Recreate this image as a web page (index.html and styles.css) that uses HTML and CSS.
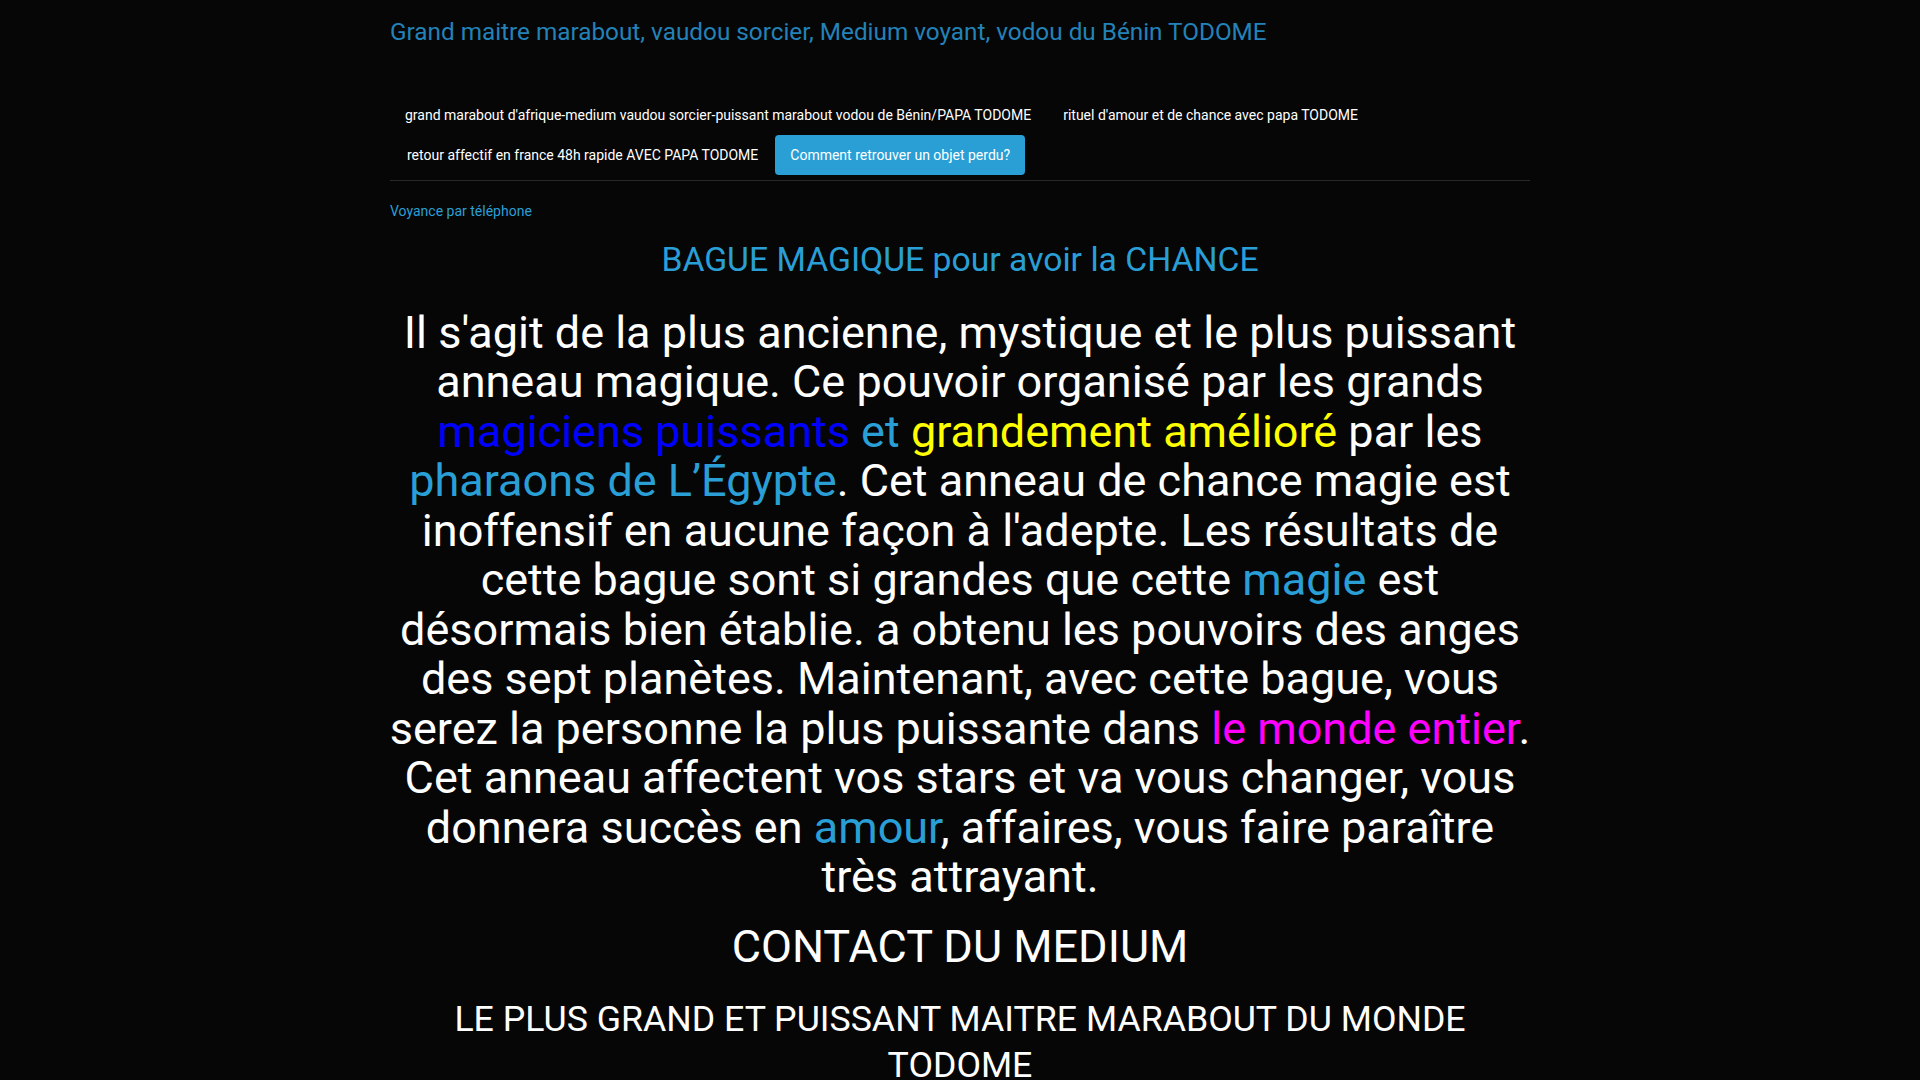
FILE: index.html
```html
<!DOCTYPE html>
<html lang="fr">
<head>
<meta charset="utf-8">
<title>Grand maitre marabout, vaudou sorcier, Medium voyant, vodou du Bénin TODOME</title>
<link rel="stylesheet" href="styles.css">
</head>
<body>
<div class="container">
  <header class="site-header">
    <h1 class="site-title">Grand maitre marabout, vaudou sorcier, Medium voyant, vodou du Bénin TODOME</h1>
  </header>
  <nav class="menu">
    <ul class="pills">
      <li><a href="#">grand marabout d'afrique-medium vaudou sorcier-puissant marabout vodou de Bénin/PAPA TODOME</a></li>
      <li><a href="#">rituel d'amour et de chance avec papa TODOME</a></li>
      <li><a href="#">retour affectif en france 48h rapide AVEC PAPA TODOME</a></li>
      <li class="active"><a href="#">Comment retrouver un objet perdu?</a></li>
    </ul>
  </nav>
  <div class="crumb"><a href="#">Voyance par téléphone</a></div>
  <main class="article">
    <h2 class="article-title">BAGUE MAGIQUE pour avoir la CHANCE</h2>
    <p class="lead-text">Il s'agit de la plus ancienne, mystique et le plus puissant anneau magique. Ce pouvoir organisé par les grands <span class="c-blue">magiciens puissants</span> <span class="c-link">et</span> <span class="c-yellow">grandement amélioré</span> par les <span class="c-link">pharaons de L’Égypte</span>. Cet anneau de chance magie est inoffensif en aucune façon à l'adepte. Les résultats de cette bague sont si grandes que cette <span class="c-link">magie</span> est désormais bien établie. a obtenu les pouvoirs des anges des sept planètes. Maintenant, avec cette bague, vous serez la personne la plus puissante dans <span class="c-magenta">le monde entier</span>. Cet anneau affectent vos stars et va vous changer, vous donnera succès en <span class="c-link">amour</span>, affaires, vous faire paraître très attrayant.</p>
    <h3 class="contact-title">CONTACT DU MEDIUM</h3>
    <h4 class="master-title">LE PLUS GRAND ET PUISSANT MAITRE MARABOUT DU MONDE TODOME</h4>
  </main>
</div>
</body>
</html>
```

FILE: styles.css
```css
html, body {
  margin: 0;
  padding: 0;
}
body {
  background: #060606;
  color: #ffffff;
  font-family: Roboto, "Helvetica Neue", Arial, sans-serif;
  font-size: 14px;
  line-height: 20px;
}
a {
  text-decoration: none;
}
.container {
  width: 1140px;
  margin: 0 auto;
}
.site-header {
  padding-top: 19px;
}
.site-title {
  margin: 0;
  font-size: 24.3px;
  font-weight: 400;
  line-height: 1.1;
  color: #2382b8;
}
.menu {
  margin-top: 49px;
  padding-bottom: 5px;
  border-bottom: 1px solid #282828;
}
.pills {
  list-style: none;
  margin: 0;
  padding: 0;
  display: flex;
  flex-wrap: wrap;
}
.pills li {
  margin-left: 2px;
}
.pills li:first-child {
  margin-left: 0;
}
.pills a {
  display: block;
  padding: 10px 15px;
  color: #ffffff;
  border-radius: 4px;
}
.pills li.active a {
  background: #2a9fd6;
  color: #ffffff;
}
.crumb {
  padding-top: 20px;
}
.crumb a {
  color: #2a9fd6;
}
.article {
  text-align: center;
}
.article-title {
  margin: 20px 0 0;
  font-size: 33.7px;
  font-weight: 400;
  line-height: 1.1;
  color: #2a9fd6;
}
.lead-text {
  margin: 30px -6px 0;
  font-size: 45px;
  line-height: 49.5px;
  color: #ffffff;
}
.c-blue { color: #0000ff; }
.c-link { color: #2a9fd6; }
.c-yellow { color: #ffff00; }
.c-magenta { color: #ff00ff; }
.contact-title {
  margin: 20px 0 0;
  font-size: 45px;
  font-weight: 400;
  line-height: 1.1;
  color: #ffffff;
}
.master-title {
  margin: 25px 0 0;
  font-size: 35.7px;
  font-weight: 400;
  line-height: 46px;
  color: #ffffff;
}
```
